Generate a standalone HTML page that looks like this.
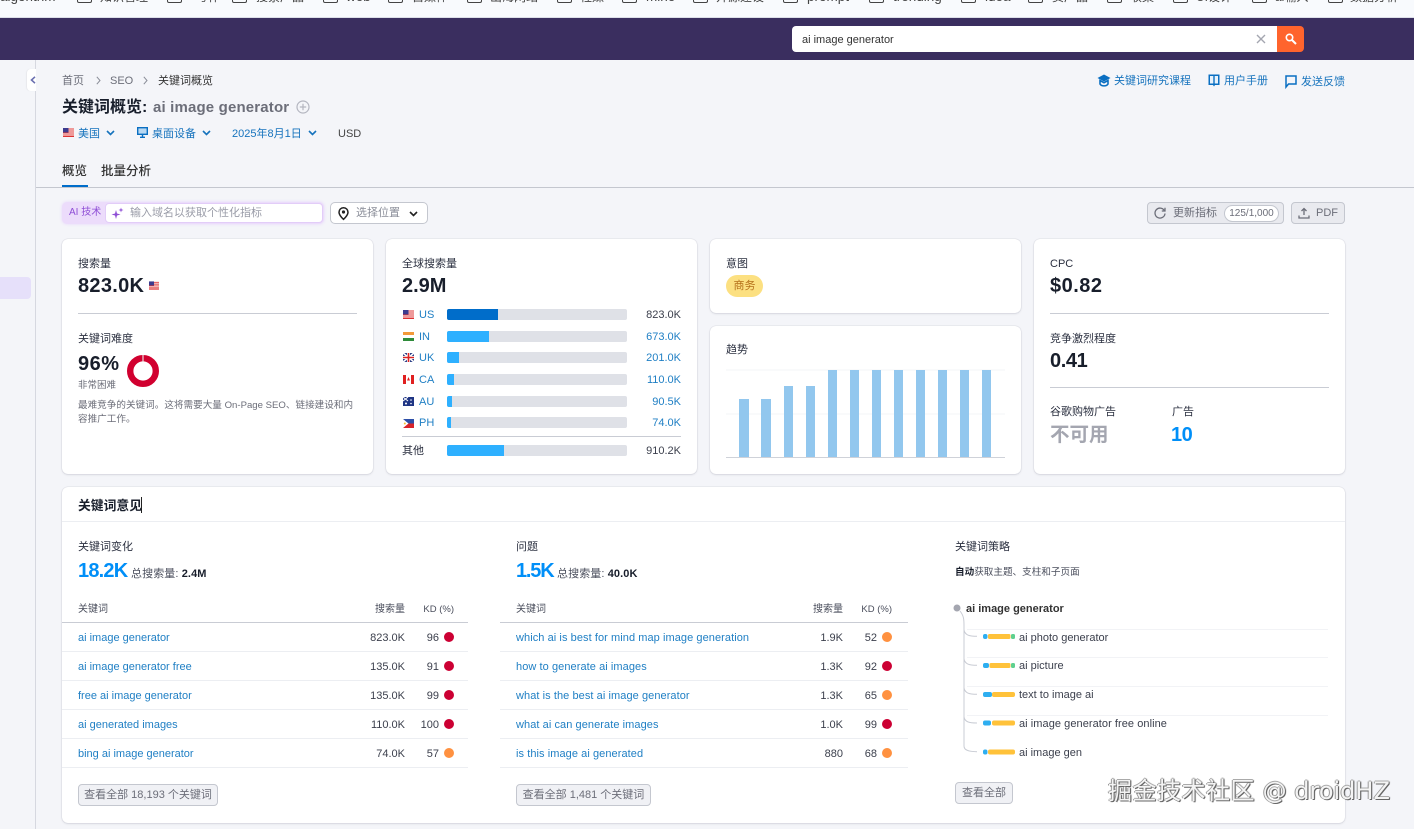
<!DOCTYPE html>
<html lang="zh"><head><meta charset="utf-8"><title>关键词概览</title>
<style>
*{box-sizing:border-box}
html,body{margin:0;padding:0}
body{width:1414px;height:829px;overflow:hidden;position:relative;background:#f4f5f9;font-family:"Liberation Sans","Noto Sans CJK SC",sans-serif;color:#333;font-size:11px}
.t{position:absolute;white-space:nowrap;line-height:16px;height:16px;margin-top:1px}
.b{position:absolute}
.r{text-align:right}
.card{position:absolute;background:#fff;border-radius:6px;box-shadow:0 0 1px rgba(25,30,60,.28),0 1px 2px rgba(25,30,60,.1)}
.l{color:#2b3040;font-size:11px}
.big{font-size:20px;font-weight:700;color:#181e2b;line-height:24px;height:24px}
.bl{color:#1f7fc4}
.q{letter-spacing:.07px}
.hr{position:absolute;height:1px;background:#c9ccd4}
.sep{position:absolute;height:1px;background:#eceef2}
.bar{position:absolute;left:447px;width:180px;height:11px;background:#dfe1e7;border-radius:2px;overflow:hidden}
.bar i{display:block;height:11px;background:#2eb0ff}
.dot{position:absolute;width:10px;height:10px;border-radius:5px}
.red{background:#cc0033}.or{background:#ff9140}
.btn{position:absolute;background:#f0f1f5;border:1px solid #c4c7cf;border-radius:4px;color:#6c6e79;text-align:center;font-size:11px;line-height:21px;white-space:nowrap}
.hd{font-size:10px;color:#4a4e5c}
.kd{font-size:9.5px}
.val{font-size:11px;color:#3b3f4c}
.f{position:absolute;width:15px;height:14px;border:1.5px solid #444;border-top-width:0;border-radius:0 0 2px 2px;top:-11px}
.tx{position:absolute;top:-11px;font-size:12px;line-height:16px;color:#444;white-space:nowrap}
.la{font-size:13.5px}
svg{position:absolute;overflow:visible}
.wm{position:absolute;left:1108px;top:774px;height:30px;line-height:30px;white-space:nowrap;font-family:"DejaVu Sans","Noto Sans CJK SC",sans-serif;font-size:24px;color:#f4f4f4;text-shadow:1px 1px 0 #666,-1px 0 0 #999,0 -1px 0 #aaa,1px 0 1px #555}
.wm b{font-weight:400;font-family:"Noto Sans CJK SC",sans-serif;letter-spacing:.5px}
</style></head>
<body>
<!-- bookmarks bar -->
<div class="b" style="left:0;top:0;width:1414px;height:18px;background:#f8fafd;border-bottom:1px solid #dcdfe8"></div>
<div class="tx la" style="left:0">algorithm</div>
<div class="f" style="left:77px"></div><div class="tx" style="left:100px">知识管理</div>
<div class="f" style="left:167px"></div><div class="tx" style="left:196px">写作</div>
<div class="f" style="left:232px"></div><div class="tx" style="left:256px">搜索产品</div>
<div class="f" style="left:323px"></div><div class="tx la" style="left:346px">web</div>
<div class="f" style="left:388px"></div><div class="tx" style="left:412px">自媒体</div>
<div class="f" style="left:467px"></div><div class="tx" style="left:490px">出海网站</div>
<div class="f" style="left:557px"></div><div class="tx" style="left:580px">社媒</div>
<div class="f" style="left:622px"></div><div class="tx la" style="left:646px">mine</div>
<div class="f" style="left:693px"></div><div class="tx" style="left:716px">开源建设</div>
<div class="f" style="left:783px"></div><div class="tx la" style="left:807px">prompt</div>
<div class="f" style="left:869px"></div><div class="tx la" style="left:893px">trending</div>
<div class="f" style="left:961px"></div><div class="tx la" style="left:985px">idea</div>
<div class="f" style="left:1028px"></div><div class="tx" style="left:1052px">资产品</div>
<div class="f" style="left:1107px"></div><div class="tx" style="left:1130px">收集</div>
<div class="f" style="left:1173px"></div><div class="tx" style="left:1196px">UI设计</div>
<div class="f" style="left:1252px"></div><div class="tx" style="left:1275px">ai输入</div>
<div class="f" style="left:1328px"></div><div class="tx" style="left:1350px">数据分析</div>

<!-- purple header -->
<div class="b" style="left:0;top:18px;width:1414px;height:42px;background:#3a2e5f"></div>
<div class="b" style="left:792px;top:26px;width:486px;height:26px;background:#fff;border-radius:4px 0 0 4px"></div>
<div class="t" style="left:802px;top:31px;color:#333">ai image generator</div>
<svg style="left:1256px;top:34px" width="10" height="10" viewBox="0 0 10 10"><path d="M1 1L9 9M9 1L1 9" stroke="#a4a6b0" stroke-width="1.4" fill="none"/></svg>
<div class="b" style="left:1277px;top:26px;width:27px;height:26px;background:#ff642d;border-radius:0 4px 4px 0"></div>
<svg style="left:1285px;top:33px" width="12" height="12" viewBox="0 0 12 12"><circle cx="4.5" cy="4.5" r="3.2" stroke="#fff" stroke-width="1.6" fill="none"/><path d="M7 7L11 11" stroke="#fff" stroke-width="2" fill="none"/></svg>

<!-- sidebar -->
<div class="b" style="left:35px;top:60px;width:1px;height:769px;background:#d6d8e0"></div>
<div class="b" style="left:27px;top:69px;width:9px;height:22px;background:#fff;border-radius:4px 0 0 4px;box-shadow:-1px 0 1px rgba(0,0,0,.05)"></div>
<svg style="left:30px;top:76px" width="6" height="8" viewBox="0 0 6 8"><path d="M5 .8L1.5 4L5 7.2" stroke="#6a6fb0" stroke-width="1.6" fill="none"/></svg>
<div class="b" style="left:0;top:277px;width:31px;height:22px;background:#e6e0fa;border-radius:0 4px 4px 0"></div>

<!-- breadcrumbs -->
<div class="t" style="left:62px;top:72px;color:#6c6e79">首页</div>
<svg style="left:96px;top:76px" width="5" height="9" viewBox="0 0 5 9"><path d="M.8 .8L4 4.5L.8 8.2" stroke="#8a8d98" stroke-width="1" fill="none"/></svg>
<div class="t" style="left:110px;top:72px;color:#6c6e79">SEO</div>
<svg style="left:143px;top:76px" width="5" height="9" viewBox="0 0 5 9"><path d="M.8 .8L4 4.5L.8 8.2" stroke="#8a8d98" stroke-width="1" fill="none"/></svg>
<div class="t" style="left:158px;top:72px;color:#333">关键词概览</div>

<!-- top links -->
<svg style="left:1097px;top:74px" width="14" height="13" viewBox="0 0 14 13"><path d="M7 .5L13.500 4L7 7.500L.5 4Z" fill="#0a6fc2"/><path d="M3 6.500V10C4.500 12.500 9.500 12.500 11 10V6.500L7 8.700Z" fill="none" stroke="#0a6fc2" stroke-width="1.600"/></svg>
<div class="t bl" style="left:1114px;top:72px;color:#1673bd">关键词研究课程</div>
<svg style="left:1208px;top:74px" width="12" height="13" viewBox="0 0 12 13"><path d="M.5 .5H11.500V11H7L6 12.500L5 11H.5Z" fill="#0a6fc2"/><path d="M2 2H5.300V9.500H2ZM6.700 2H10V9.500H6.700Z" fill="#e8f2fb"/></svg>
<div class="t bl" style="left:1224px;top:72px;color:#1673bd">用户手册</div>
<svg style="left:1285px;top:75px" width="12" height="13" viewBox="0 0 12 13"><path d="M1 1H11V9H3.500L1 12Z" fill="none" stroke="#0a6fc2" stroke-width="1.500"/></svg>
<div class="t bl" style="left:1301px;top:73px;color:#1673bd">发送反馈</div>

<!-- title -->
<div class="t" style="left:62px;top:97px;height:20px;line-height:20px;font-size:16px;font-weight:700;color:#181e2b">关键词概览:</div>
<div class="t" style="left:153px;top:97px;height:20px;line-height:20px;font-size:15px;font-weight:700;color:#6c6e79;letter-spacing:.16px">ai image generator</div>
<svg style="left:296px;top:100px" width="14" height="14" viewBox="0 0 14 14"><circle cx="7" cy="7" r="6" fill="none" stroke="#b4b6c0" stroke-width="1.2"/><path d="M7 3.800V10.200M3.800 7H10.200" stroke="#b4b6c0" stroke-width="1.2"/></svg>

<!-- filters -->
<svg style="left:63px;top:128px" width="11" height="9" viewBox="0 0 11 9"><rect width="11" height="9" fill="#fff"/><path d="M0 1H11M0 3H11M0 5H11M0 7H11M0 8.500H11" stroke="#d33" stroke-width="1"/><rect width="5.500" height="4.500" fill="#3c3b8e"/></svg>
<div class="t" style="left:78px;top:125px;color:#1673bd">美国</div>
<svg style="left:106px;top:130px" width="9" height="6" viewBox="0 0 9 6"><path d="M1 1L4.500 4.500L8 1" fill="none" stroke="#1673bd" stroke-width="1.600"/></svg>
<svg style="left:137px;top:127px" width="11" height="11" viewBox="0 0 11 11"><rect x=".7" y=".7" width="9.600" height="6.600" fill="#b8d8f2" stroke="#0a6fc2" stroke-width="1.400"/><path d="M5.500 7.500V10M3 10.300H8" stroke="#0a6fc2" stroke-width="1.400"/></svg>
<div class="t" style="left:152px;top:125px;color:#1673bd">桌面设备</div>
<svg style="left:202px;top:130px" width="9" height="6" viewBox="0 0 9 6"><path d="M1 1L4.500 4.500L8 1" fill="none" stroke="#1673bd" stroke-width="1.600"/></svg>
<div class="t" style="left:232px;top:125px;color:#1673bd">2025年8月1日</div>
<svg style="left:308px;top:130px" width="9" height="6" viewBox="0 0 9 6"><path d="M1 1L4.500 4.500L8 1" fill="none" stroke="#1673bd" stroke-width="1.600"/></svg>
<div class="t" style="left:338px;top:125px;color:#444">USD</div>

<!-- tabs -->
<div class="t" style="left:62px;top:162px;font-size:12.500px;color:#333;font-weight:500">概览</div>
<div class="t" style="left:101px;top:162px;font-size:12.500px;color:#333;font-weight:500">批量分析</div>
<div class="b" style="left:36px;top:187px;width:1378px;height:1px;background:#c4c7cf"></div>
<div class="b" style="left:62px;top:185px;width:26px;height:2px;background:#006dca"></div>

<!-- AI field -->
<div class="b" style="left:62px;top:202px;width:262px;height:22px;background:#ecdcfb;border-radius:5px;box-shadow:0 0 3px #e6d5fa"></div>
<div class="t" style="left:69px;top:204px;font-size:10px;color:#8f4fd6">AI 技术</div>
<div class="b" style="left:105px;top:203px;width:218px;height:20px;background:#fff;border-radius:4px;border:1px solid #e2cdf8"></div>
<svg style="left:111px;top:207px" width="13" height="13" viewBox="0 0 13 13"><path d="M5 3L6 6.500L9.500 7.500L6 8.500L5 12L4 8.500L.5 7.500L4 6.500Z" fill="#8f4fd6"/><path d="M10 .5L10.600 2.400L12.500 3L10.600 3.600L10 5.500L9.400 3.600L7.500 3L9.400 2.400Z" fill="#8f4fd6"/></svg>
<div class="t" style="left:130px;top:204px;color:#9a9ca8">输入域名以获取个性化指标</div>
<div class="b" style="left:330px;top:202px;width:98px;height:22px;background:#fff;border:1px solid #c4c7cf;border-radius:5px"></div>
<svg style="left:338px;top:207px" width="11" height="13" viewBox="0 0 11 13"><path d="M5.500 12.300C2.500 9.500 1 7.500 1 5.200A4.500 4.500 0 0 1 10 5.200C10 7.500 8.500 9.500 5.500 12.300Z" fill="none" stroke="#222" stroke-width="1.500"/><circle cx="5.500" cy="5" r="1.600" fill="#222"/></svg>
<div class="t" style="left:356px;top:204px;color:#8a8d98">选择位置</div>
<svg style="left:409px;top:211px" width="9" height="6" viewBox="0 0 9 6"><path d="M1 1L4.500 4.500L8 1" fill="none" stroke="#222" stroke-width="1.600"/></svg>

<!-- right buttons -->
<div class="b" style="left:1147px;top:202px;width:137px;height:22px;background:#e9eaef;border:1px solid #c4c7cf;border-radius:4px"></div>
<svg style="left:1154px;top:207px" width="12" height="12" viewBox="0 0 12 12"><path d="M10.300 3.500A5 5 0 1 0 11 6.500" fill="none" stroke="#6c6e79" stroke-width="1.300"/><path d="M11 .8V4H7.800" fill="none" stroke="#6c6e79" stroke-width="1.300"/></svg>
<div class="t" style="left:1173px;top:204px;color:#6c6e79">更新指标</div>
<div class="b" style="left:1224px;top:205px;width:55px;height:17px;background:#fff;border:1px solid #c4c7cf;border-radius:9px;text-align:center;font-size:10px;line-height:15px;color:#6c6e79">125/1,000</div>
<div class="b" style="left:1291px;top:202px;width:54px;height:22px;background:#e9eaef;border:1px solid #c4c7cf;border-radius:4px"></div>
<svg style="left:1298px;top:207px" width="12" height="12" viewBox="0 0 12 12"><path d="M6 8V1.500M3.500 4L6 1.500L8.500 4M1 8.500V11H11V8.500" fill="none" stroke="#6c6e79" stroke-width="1.300"/></svg>
<div class="t" style="left:1316px;top:204px;color:#6c6e79">PDF</div>

<!-- cards -->
<div class="card" style="left:62px;top:239px;width:311px;height:235px"></div>
<div class="card" style="left:386px;top:239px;width:311px;height:235px"></div>
<div class="card" style="left:710px;top:239px;width:311px;height:74px"></div>
<div class="card" style="left:710px;top:326px;width:311px;height:148px"></div>
<div class="card" style="left:1034px;top:239px;width:311px;height:235px"></div>
<div class="card" style="left:62px;top:487px;width:1283px;height:336px"></div>

<!-- card 1 -->
<div class="t l" style="left:78px;top:255px">搜索量</div>
<div class="t big" style="left:78px;top:273px;letter-spacing:.3px">823.0K</div>
<svg style="left:149px;top:281px" width="10" height="9" viewBox="0 0 11 9"><rect width="11" height="9" fill="#fff"/><path d="M0 1H11M0 3H11M0 5H11M0 7H11M0 8.500H11" stroke="#d33" stroke-width="1"/><rect width="5.500" height="4.500" fill="#3c3b8e"/></svg>
<div class="hr" style="left:78px;top:313px;width:279px"></div>
<div class="t l" style="left:78px;top:330px">关键词难度</div>
<div class="t big" style="left:78px;top:351px;letter-spacing:.5px">96%</div>
<div class="t" style="left:78px;top:377px;font-size:9.500px;color:#6c6e79">非常困难</div>
<svg style="left:127px;top:355px" width="32" height="32" viewBox="0 0 32 32"><circle cx="16" cy="16" r="12.800" fill="none" stroke="#d1002f" stroke-width="6.400"/><path d="M15.400 0V6.500H16.600V0Z" fill="#e8d8dc"/></svg>
<div class="t" style="left:78px;top:398px;font-size:9.600px;line-height:14px;color:#6c6e79">最难竞争的关键词。这将需要大量 On-Page SEO、链接建设和内</div>
<div class="t" style="left:78px;top:412px;font-size:9.600px;line-height:14px;color:#6c6e79">容推广工作。</div>

<!-- card 2 -->
<div class="t l" style="left:402px;top:255px">全球搜索量</div>
<div class="t big" style="left:402px;top:273px">2.9M</div>

<svg style="left:403px;top:310px" width="11" height="9" viewBox="0 0 11 9"><rect width="11" height="9" fill="#fff"/><path d="M0 1H11M0 3H11M0 5H11M0 7H11M0 8.500H11" stroke="#d33" stroke-width="1"/><rect width="5.500" height="4.500" fill="#3c3b8e"/></svg>
<div class="t bl" style="left:419px;top:306px">US</div>
<div class="bar" style="top:309px"><i style="width:51px;background:#006dca"></i></div>
<div class="t r val" style="right:733px;top:306px">823.0K</div>

<svg style="left:403px;top:332px" width="11" height="9" viewBox="0 0 11 9"><rect width="11" height="3" fill="#f39a3a"/><rect y="3" width="11" height="3" fill="#fff"/><rect y="6" width="11" height="3" fill="#2e8b3a"/></svg>
<div class="t bl" style="left:419px;top:328px">IN</div>
<div class="bar" style="top:331px"><i style="width:42px"></i></div>
<div class="t r bl" style="right:733px;top:328px">673.0K</div>

<svg style="left:403px;top:353px" width="11" height="9" viewBox="0 0 11 9"><rect width="11" height="9" fill="#2b3f86"/><path d="M0 0L11 9M11 0L0 9" stroke="#fff" stroke-width="1.600"/><path d="M5.500 0V9M0 4.500H11" stroke="#fff" stroke-width="3"/><path d="M5.500 0V9M0 4.500H11" stroke="#d22" stroke-width="1.600"/></svg>
<div class="t bl" style="left:419px;top:349px">UK</div>
<div class="bar" style="top:352px"><i style="width:12px"></i></div>
<div class="t r bl" style="right:733px;top:349px">201.0K</div>

<svg style="left:403px;top:375px" width="11" height="9" viewBox="0 0 11 9"><rect width="11" height="9" fill="#fff"/><rect width="3" height="9" fill="#e02020"/><rect x="8" width="3" height="9" fill="#e02020"/><path d="M5.500 2L7 5.500H4Z" fill="#e02020"/></svg>
<div class="t bl" style="left:419px;top:371px">CA</div>
<div class="bar" style="top:374px"><i style="width:7px"></i></div>
<div class="t r bl" style="right:733px;top:371px">110.0K</div>

<svg style="left:403px;top:397px" width="11" height="9" viewBox="0 0 11 9"><rect width="11" height="9" fill="#1f3584"/><path d="M0 0L5 4M5 0L0 4" stroke="#fff" stroke-width="1"/><circle cx="8" cy="3" r=".8" fill="#fff"/><circle cx="8" cy="6.500" r=".8" fill="#fff"/><circle cx="3" cy="6.500" r="1" fill="#fff"/></svg>
<div class="t bl" style="left:419px;top:393px">AU</div>
<div class="bar" style="top:396px"><i style="width:5px"></i></div>
<div class="t r bl" style="right:733px;top:393px">90.5K</div>

<svg style="left:403px;top:419px" width="11" height="9" viewBox="0 0 11 9"><rect width="11" height="4.500" fill="#2d4fa8"/><rect y="4.500" width="11" height="4.500" fill="#d8232a"/><path d="M0 0L5.500 4.500L0 9Z" fill="#fff"/><circle cx="1.800" cy="4.500" r="1" fill="#f2c230"/></svg>
<div class="t bl" style="left:419px;top:414px">PH</div>
<div class="bar" style="top:417px"><i style="width:4px"></i></div>
<div class="t r bl" style="right:733px;top:414px">74.0K</div>

<div class="hr" style="left:402px;top:436px;width:279px"></div>
<div class="t l" style="left:402px;top:442px">其他</div>
<div class="bar" style="top:445px"><i style="width:57px"></i></div>
<div class="t r val" style="right:733px;top:442px">910.2K</div>

<!-- card 3 -->
<div class="t l" style="left:726px;top:255px">意图</div>
<div class="b" style="left:726px;top:275px;width:37px;height:22px;background:#fce081;border-radius:11px;text-align:center;line-height:22px;font-size:11px;color:#b5701a">商务</div>

<!-- card 4 -->
<div class="t l" style="left:726px;top:341px">趋势</div>
<svg style="left:726px;top:365px" width="280" height="95" viewBox="0 0 280 95">
<path d="M0 5H279M0 49H279" stroke="#f3f4f7" stroke-width="1"/>
<g fill="#92c7ee">
<rect x="13" y="34" width="10" height="58"/><rect x="35" y="34" width="10" height="58"/>
<rect x="58" y="21" width="9" height="71"/><rect x="80" y="21" width="9" height="71"/>
<rect x="102" y="5" width="9" height="87"/><rect x="124" y="5" width="9" height="87"/>
<rect x="146" y="5" width="9" height="87"/><rect x="168" y="5" width="9" height="87"/>
<rect x="190" y="5" width="9" height="87"/><rect x="212" y="5" width="9" height="87"/>
<rect x="234" y="5" width="9" height="87"/><rect x="256" y="5" width="9" height="87"/>
</g>
<path d="M0 92.500H279" stroke="#cfd2d9" stroke-width="1"/>
</svg>

<!-- card 5 -->
<div class="t l" style="left:1050px;top:255px">CPC</div>
<div class="t big" style="left:1050px;top:273px;letter-spacing:.5px">$0.82</div>
<div class="hr" style="left:1050px;top:313px;width:279px"></div>
<div class="t l" style="left:1050px;top:330px">竞争激烈程度</div>
<div class="t big" style="left:1050px;top:348px;letter-spacing:-.4px">0.41</div>
<div class="hr" style="left:1050px;top:387px;width:279px"></div>
<div class="t l" style="left:1050px;top:403px">谷歌购物广告</div>
<div class="t l" style="left:1172px;top:403px">广告</div>
<div class="t big" style="left:1050px;top:422px;color:#a4a6b0;font-size:19.500px">不可用</div>
<div class="t big" style="left:1171px;top:422px;color:#008ff8;letter-spacing:-.5px">10</div>

<!-- keyword ideas -->
<div class="t" style="left:78px;top:497px;font-size:12.800px;font-weight:700;color:#181e2b">关键词意见</div>
<div class="b" style="left:141px;top:497px;width:1px;height:16px;background:#222"></div>
<div class="sep" style="left:62px;top:521px;width:1283px"></div>

<!-- col1 -->
<div class="t l" style="left:78px;top:538px">关键词变化</div>
<div class="t big" style="left:78px;top:558px;color:#008ff8;letter-spacing:-.8px">18.2K</div>
<div class="t" style="left:131px;top:565px;color:#4a4e5c;letter-spacing:.1px">总搜索量: <b style="color:#181e2b">2.4M</b></div>
<div class="t hd" style="left:78px;top:601px">关键词</div>
<div class="t hd r" style="right:1009px;top:601px">搜索量</div>
<div class="t hd kd r" style="right:960px;top:601px">KD (%)</div>
<div class="hr" style="left:62px;top:622px;width:406px"></div>

<div class="t bl" style="left:78px;top:629px">ai image generator</div><div class="t val r" style="right:1009px;top:629px">823.0K</div><div class="t val r" style="right:975px;top:629px">96</div><div class="dot red" style="left:444px;top:632px"></div>
<div class="sep" style="left:62px;top:651px;width:406px"></div>
<div class="t bl" style="left:78px;top:658px">ai image generator free</div><div class="t val r" style="right:1009px;top:658px">135.0K</div><div class="t val r" style="right:975px;top:658px">91</div><div class="dot red" style="left:444px;top:661px"></div>
<div class="sep" style="left:62px;top:680px;width:406px"></div>
<div class="t bl" style="left:78px;top:687px">free ai image generator</div><div class="t val r" style="right:1009px;top:687px">135.0K</div><div class="t val r" style="right:975px;top:687px">99</div><div class="dot red" style="left:444px;top:690px"></div>
<div class="sep" style="left:62px;top:709px;width:406px"></div>
<div class="t bl" style="left:78px;top:716px">ai generated images</div><div class="t val r" style="right:1009px;top:716px">110.0K</div><div class="t val r" style="right:975px;top:716px">100</div><div class="dot red" style="left:444px;top:719px"></div>
<div class="sep" style="left:62px;top:738px;width:406px"></div>
<div class="t bl" style="left:78px;top:745px">bing ai image generator</div><div class="t val r" style="right:1009px;top:745px">74.0K</div><div class="t val r" style="right:975px;top:745px">57</div><div class="dot or" style="left:444px;top:748px"></div>
<div class="sep" style="left:62px;top:767px;width:406px"></div>
<div class="btn" style="left:78px;top:784px;width:140px;height:22px">查看全部 18,193 个关键词</div>

<!-- col2 -->
<div class="t l" style="left:516px;top:538px">问题</div>
<div class="t big" style="left:516px;top:558px;color:#008ff8;letter-spacing:-1.200px">1.5K</div>
<div class="t" style="left:557px;top:565px;color:#4a4e5c;letter-spacing:.1px">总搜索量: <b style="color:#181e2b">40.0K</b></div>
<div class="t hd" style="left:516px;top:601px">关键词</div>
<div class="t hd r" style="right:571px;top:601px">搜索量</div>
<div class="t hd kd r" style="right:522px;top:601px">KD (%)</div>
<div class="hr" style="left:500px;top:622px;width:408px"></div>

<div class="t bl q" style="left:516px;top:629px">which ai is best for mind map image generation</div><div class="t val r" style="right:571px;top:629px">1.9K</div><div class="t val r" style="right:537px;top:629px">52</div><div class="dot or" style="left:882px;top:632px"></div>
<div class="sep" style="left:500px;top:651px;width:408px"></div>
<div class="t bl q" style="left:516px;top:658px">how to generate ai images</div><div class="t val r" style="right:571px;top:658px">1.3K</div><div class="t val r" style="right:537px;top:658px">92</div><div class="dot red" style="left:882px;top:661px"></div>
<div class="sep" style="left:500px;top:680px;width:408px"></div>
<div class="t bl q" style="left:516px;top:687px">what is the best ai image generator</div><div class="t val r" style="right:571px;top:687px">1.3K</div><div class="t val r" style="right:537px;top:687px">65</div><div class="dot or" style="left:882px;top:690px"></div>
<div class="sep" style="left:500px;top:709px;width:408px"></div>
<div class="t bl q" style="left:516px;top:716px">what ai can generate images</div><div class="t val r" style="right:571px;top:716px">1.0K</div><div class="t val r" style="right:537px;top:716px">99</div><div class="dot red" style="left:882px;top:719px"></div>
<div class="sep" style="left:500px;top:738px;width:408px"></div>
<div class="t bl q" style="left:516px;top:745px">is this image ai generated</div><div class="t val r" style="right:571px;top:745px">880</div><div class="t val r" style="right:537px;top:745px">68</div><div class="dot or" style="left:882px;top:748px"></div>
<div class="sep" style="left:500px;top:767px;width:408px"></div>
<div class="btn" style="left:516px;top:784px;width:135px;height:22px">查看全部 1,481 个关键词</div>

<!-- col3 -->
<div class="t l" style="left:955px;top:538px">关键词策略</div>
<div class="t" style="left:955px;top:564px;font-size:9.600px;color:#4a4e5c"><b style="color:#181e2b">自动</b>获取主题、支柱和子页面</div>
<svg style="left:950px;top:600px" width="390" height="165" viewBox="0 0 390 165">
<path d="M17 29.500H378M17 57.500H378M17 86.500H378M17 115.500H378" stroke="#f2f3f6" stroke-width="1"/>
<circle cx="7" cy="8" r="3.500" fill="#a4a6b0"/>
<path d="M10 11C14 16 14 20 14 26V146C14 150 18 151.700 27 151.700" fill="none" stroke="#c9ccd4" stroke-width="1"/>
<path d="M14 30C15 35 19 36.300 27 36.300M14 59C15 64 19 65.300 27 65.300M14 88C15 93 19 94.300 27 94.300M14 117C15 122 19 123 27 123" fill="none" stroke="#c9ccd4" stroke-width="1"/>
<rect x="33" y="34" width="4.500" height="5" rx="2" fill="#2eaef0"/><rect x="38" y="34" width="22.500" height="5" rx="1.500" fill="#ffc23a"/><rect x="61" y="34" width="4" height="5" rx="1.500" fill="#5ed08f"/>
<rect x="33" y="63" width="6" height="5" rx="2" fill="#2eaef0"/><rect x="39.500" y="63" width="21" height="5" rx="1.500" fill="#ffc23a"/><rect x="61" y="63" width="4" height="5" rx="1.500" fill="#5ed08f"/>
<rect x="33" y="92" width="9" height="5" rx="2" fill="#2eaef0"/><rect x="42" y="92" width="23" height="5" rx="2" fill="#ffc23a"/>
<rect x="33" y="120.500" width="8" height="5" rx="2" fill="#2eaef0"/><rect x="42" y="120.500" width="23" height="5" rx="2" fill="#ffc23a"/>
<rect x="33" y="149.500" width="4.500" height="5" rx="2" fill="#2eaef0"/><rect x="38" y="149.500" width="27" height="5" rx="2" fill="#ffc23a"/>
</svg>
<div class="t" style="left:966px;top:600px;font-weight:700;color:#333">ai image generator</div>
<div class="t val" style="left:1019px;top:629px">ai photo generator</div>
<div class="t val" style="left:1019px;top:657px">ai picture</div>
<div class="t val" style="left:1019px;top:686px">text to image ai</div>
<div class="t val" style="left:1019px;top:715px;letter-spacing:.06px">ai image generator free online</div>
<div class="t val" style="left:1019px;top:744px">ai image gen</div>
<div class="btn" style="left:955px;top:782px;width:58px;height:22px">查看全部</div>

<div class="wm"><b>掘金技术社区</b> @ droidHZ</div>
</body></html>
